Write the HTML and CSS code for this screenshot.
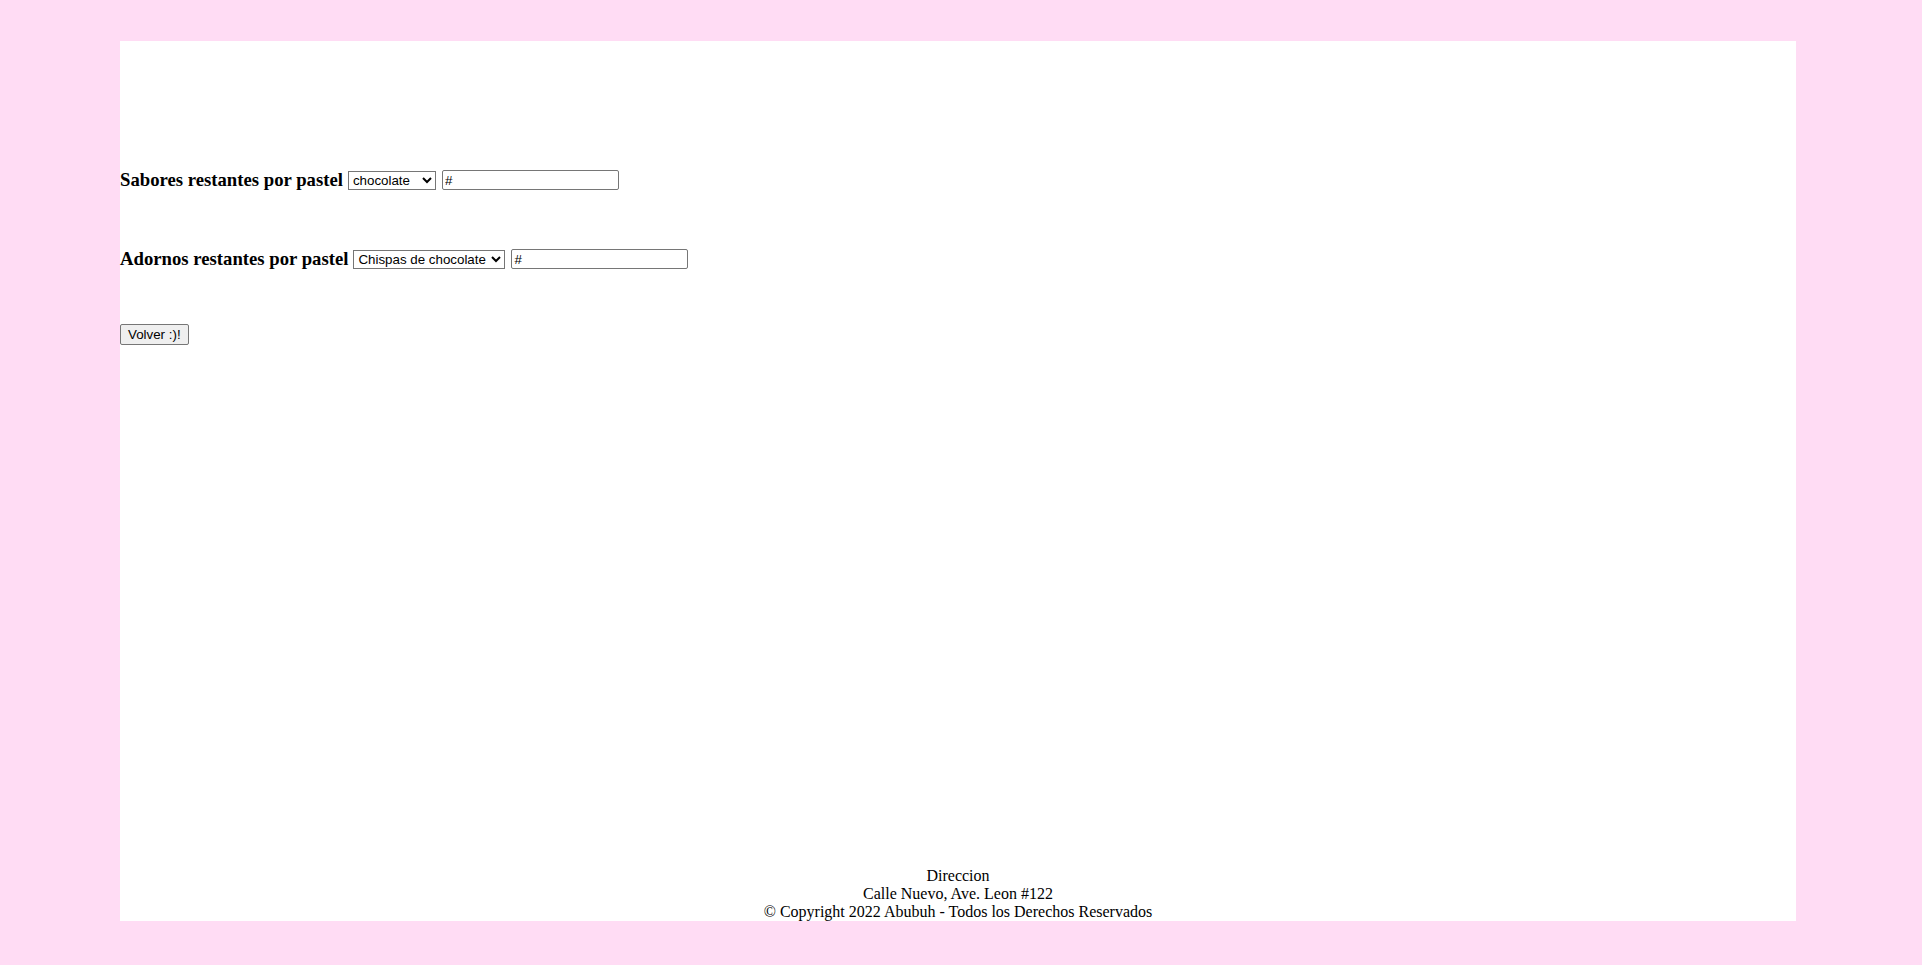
FILE: index.html
```html
<!DOCTYPE html>
<html lang="es">
<head>
<meta charset="utf-8">
<title>Inventario</title>
<link rel="stylesheet" href="styles.css">
</head>
<body>
<div class="page">
  <main class="content">
    <div class="row row-first">
      <h3 class="label">Sabores restantes por pastel</h3>
      <select class="sel sel-sabor"><option>chocolate</option><option>vainilla</option><option>fresa</option></select>
      <input class="num" type="text" value="#">
    </div>
    <div class="row row-second">
      <h3 class="label">Adornos restantes por pastel</h3>
      <select class="sel sel-adorno"><option>Chispas de chocolate</option><option>Fresas</option></select>
      <input class="num" type="text" value="#">
    </div>
    <div class="actions">
      <button class="btn" type="button">Volver :)!</button>
    </div>
  </main>
  <footer class="footer">
    <div>Direccion</div>
    <div>Calle Nuevo, Ave. Leon #122</div>
    <div>© Copyright 2022 Abubuh - Todos los Derechos Reservados</div>
  </footer>
</div>
</body>
</html>
```
FILE: styles.css
```css
html, body {
  margin: 0;
  padding: 0;
}
body {
  background: #ffdcf4;
  font-family: "Liberation Serif", "Times New Roman", serif;
  font-size: 16px;
  color: #000;
  padding: 41px 0 0 120px;
  height: 965px;
  box-sizing: border-box;
  overflow: hidden;
}
.page {
  width: 1676px;
  height: 880px;
  background: #fff;
  display: flex;
  flex-direction: column;
}
.content {
  display: flex;
  flex-direction: column;
  align-items: flex-start;
}
.row {
  display: flex;
  align-items: center;
  height: 22px;
}
.row-first {
  margin-top: 128px;
}
.row-second {
  margin-top: 57px;
}
.label {
  margin: 0 5px 0 0;
  font-size: 18.72px;
  font-weight: bold;
  line-height: 22px;
  white-space: nowrap;
}
.sel {
  height: 19px;
  box-sizing: border-box;
  font-family: "Liberation Sans", Arial, sans-serif;
  font-size: 13.33px;
  border: 1px solid #767676;
  border-radius: 0;
  background: #fff;
  color: #000;
  margin: 0 6px 0 0;
  padding: 0;
}
.sel-sabor { width: 88px; }
.sel-adorno { width: 152px; }
.num {
  width: 177px;
  height: 20px;
  box-sizing: border-box;
  font-family: "Liberation Sans", Arial, sans-serif;
  font-size: 13.33px;
  border: 1px solid #767676;
  border-radius: 2px;
  padding: 1px 2px;
  margin: 0;
  color: #000;
}
.actions {
  margin-top: 54px;
}
.btn {
  height: 21px;
  box-sizing: border-box;
  font-family: "Liberation Sans", Arial, sans-serif;
  font-size: 13.33px;
  background: #efefef;
  border: 1px solid #767676;
  border-radius: 2px;
  padding: 1px 7px;
  color: #000;
  margin: 0;
}
.footer {
  margin-top: auto;
  text-align: center;
  line-height: 18px;
}
```
